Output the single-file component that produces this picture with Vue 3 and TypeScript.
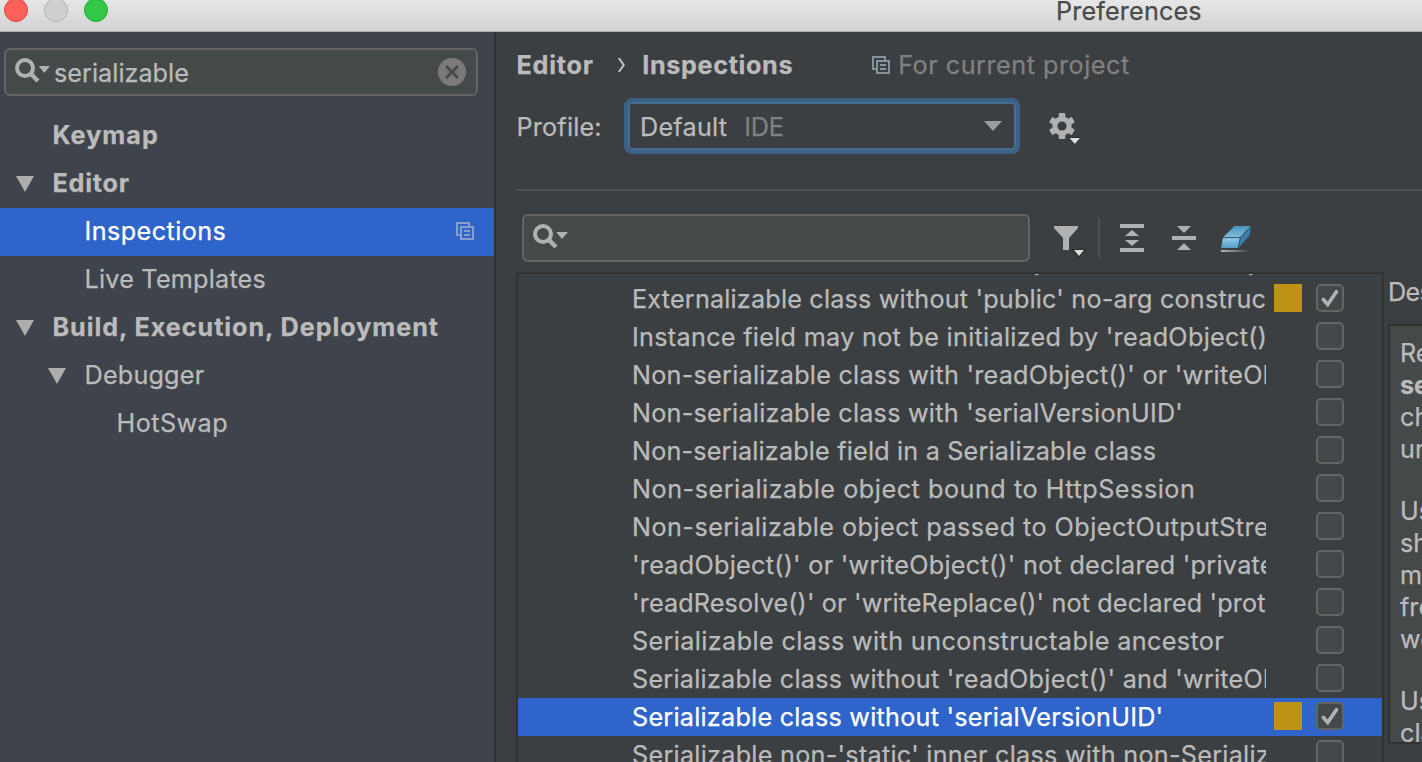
<script setup lang="ts">
interface TreeItem {
  label: string
  level: 0 | 1 | 2
  bold?: boolean
  open?: boolean
  selected?: boolean
  spacing: number
}

interface Inspection {
  label: string
  spacing: number
  checked?: boolean
  selected?: boolean
}

const tree: TreeItem[] = [
  { label: 'Keymap', level: 0, bold: true, spacing: 1 },
  { label: 'Editor', level: 0, bold: true, open: true, spacing: 0.75 },
  { label: 'Inspections', level: 1, selected: true, spacing: 0.43 },
  { label: 'Live Templates', level: 1, spacing: 0.22 },
  { label: 'Build, Execution, Deployment', level: 0, bold: true, open: true, spacing: 0.94 },
  { label: 'Debugger', level: 1, open: true, spacing: 0.2 },
  { label: 'HotSwap', level: 2, spacing: 0.45 },
]

const inspections: Inspection[] = [
  { label: "Externalizable class with 'readObject()' or 'writeObject()'", spacing: 0.24 },
  { label: "Externalizable class without 'public' no-arg constructor", spacing: 0.19, checked: true },
  { label: "Instance field may not be initialized by 'readObject()'", spacing: 0.3 },
  { label: "Non-serializable class with 'readObject()' or 'writeObject()'", spacing: 0.25 },
  { label: "Non-serializable class with 'serialVersionUID'", spacing: 0.24 },
  { label: 'Non-serializable field in a Serializable class', spacing: 0.18 },
  { label: 'Non-serializable object bound to HttpSession', spacing: 0.53 },
  { label: 'Non-serializable object passed to ObjectOutputStream', spacing: 0.46 },
  { label: "'readObject()' or 'writeObject()' not declared 'private'", spacing: 0.27 },
  { label: "'readResolve()' or 'writeReplace()' not declared 'protected'", spacing: 0.14 },
  { label: 'Serializable class with unconstructable ancestor', spacing: 0.38 },
  { label: "Serializable class without 'readObject()' and 'writeObject()'", spacing: 0.25 },
  { label: "Serializable class without 'serialVersionUID'", spacing: 0.24, checked: true, selected: true },
  { label: "Serializable non-'static' inner class with non-Serializable outer class", spacing: 0.27 },
]

const description: { text: string; bold?: boolean }[][] = [
  [{ text: 'Reports' }, { text: 'serialVersionUID', bold: true }, { text: 'checks' }, { text: 'unless' }],
  [{ text: 'Use' }, { text: 'should' }, { text: 'may' }, { text: 'from' }, { text: 'we' }],
  [{ text: 'Use' }, { text: 'class' }],
]
</script>

<template>
  <div class="window">
    <header class="titlebar">
      <div class="lights">
        <i class="light red"></i><i class="light gray"></i><i class="light green"></i>
      </div>
      <span class="title">Preferences</span>
    </header>

    <div class="body">
      <aside class="sidebar">
        <div class="field side-search">
          <svg class="search-icon" width="36" height="26" viewBox="0 0 36 26">
            <circle cx="11" cy="11" r="8" fill="none" stroke="#afb1b3" stroke-width="4" />
            <path d="M16.5 16.5 L24 24" stroke="#afb1b3" stroke-width="4.4" />
            <path d="M24.6 9 H36 L30.3 16 Z" fill="#afb1b3" />
          </svg>
          <span class="query">serializable</span>
          <svg class="clear" width="28" height="28" viewBox="0 0 28 28">
            <circle cx="14" cy="14" r="14" fill="#7a7a7a" />
            <path d="M8 8 L20 20 M20 8 L8 20" stroke="#45494a" stroke-width="2.8" />
          </svg>
        </div>
        <nav class="tree">
          <div v-for="item in tree" :key="item.label" class="node" :class="['level' + item.level, { bold: item.bold, selected: item.selected }]">
            <span class="twisty">
              <svg v-if="item.open" width="18" height="16" viewBox="0 0 18 16"><path d="M0 0 H18 L9 16 Z" fill="#adadad" /></svg>
            </span>
            <span class="node-label" :style="{ letterSpacing: item.spacing + 'px' }">{{ item.label }}</span>
            <svg v-if="item.selected" class="copy" width="18" height="18" viewBox="0 0 18 18" fill="none" stroke="#84a0c8" stroke-width="2">
              <path d="M4 13 H1 V1 H13 V4" /><rect x="5" y="5" width="12" height="12" /><path d="M8 9 H14 M8 13 H14" />
            </svg>
          </div>
        </nav>
      </aside>

      <main class="content">
        <div class="crumbs">
          <b class="crumb-a">Editor</b>
          <svg class="chevron" width="8" height="14" viewBox="0 0 8 14"><path d="M0.8 0 L5.7 7 L0.8 14" fill="none" stroke="#c4c4c4" stroke-width="2" /></svg>
          <b class="crumb-b">Inspections</b>
          <svg class="copy-head" width="18" height="18" viewBox="0 0 18 18" fill="none" stroke="#87939a" stroke-width="2">
            <path d="M4 13 H1 V1 H13 V4" /><rect x="5" y="5" width="12" height="12" /><path d="M8 9 H14 M8 13 H14" />
          </svg>
          <span class="scope">For current project</span>
        </div>

        <div class="profile">
          <span class="profile-label">Profile:</span>
          <div class="combo">
            <span class="combo-value">Default</span><span class="combo-kind">IDE</span>
            <svg class="combo-arrow" width="18" height="10" viewBox="0 0 18 10"><path d="M0 0 H18 L9 10 Z" fill="#9b9ea0" /></svg>
          </div>
          <svg class="gear" width="32" height="34" viewBox="0 0 32 34">
            <g fill="#afb1b3">
              <rect v-for="a in [0, 60, 120]" :key="a" x="9.8" y="0" width="6.4" height="26" rx="0.8" :transform="`rotate(${a} 13 13)`" />
            </g>
            <circle cx="13" cy="13" r="7" fill="none" stroke="#afb1b3" stroke-width="5.4" />
            <circle cx="13" cy="13" r="4.6" fill="#3c3f41" />
            <path d="M18 24 H32 L26 32 Z" fill="#2b2d2e" /><path d="M20.5 25 H31 L25.8 31 Z" fill="#dedede" />
          </svg>
        </div>

        <div class="rule"></div>

        <div class="toolbar">
          <div class="field list-search">
            <svg class="search-icon" width="36" height="26" viewBox="0 0 36 26">
              <circle cx="11" cy="11" r="8" fill="none" stroke="#afb1b3" stroke-width="4" />
              <path d="M16.5 16.5 L24 24" stroke="#afb1b3" stroke-width="4.4" />
              <path d="M24.2 9 H36 L30 16 Z" fill="#afb1b3" />
            </svg>
          </div>
          <svg class="filter" width="32" height="32" viewBox="0 0 32 32">
            <path d="M0 0 H24 V2 L15 12 V24 H9 V12 L0 2 Z" fill="#afb1b3" />
            <path d="M17 23 H32 L25 32 Z" fill="#2b2d2e" /><path d="M20 24 H30 L25 30 Z" fill="#dedede" />
          </svg>
          <i class="bar"></i>
          <svg class="expand" width="24" height="28" viewBox="0 0 24 28" fill="#afb1b3">
            <path d="M0 0 H24 V4 H0 Z M0 24 H24 V28 H0 Z M12 6 L19 12 H5 Z M5 16 H19 L12 22 Z" />
          </svg>
          <svg class="collapse" width="24" height="24" viewBox="0 0 24 24" fill="#afb1b3">
            <path d="M0 10 H24 V14 H0 Z M5 0 H19 L12 7 Z M12 17 L19 24 H5 Z" />
          </svg>
          <svg class="eraser" width="32" height="26" viewBox="0 0 32 26">
            <defs>
              <linearGradient id="er-top" x1="0" y1="0" x2="0" y2="1"><stop offset="0" stop-color="#4a94c0" /><stop offset="1" stop-color="#83bddb" /></linearGradient>
              <linearGradient id="er-front" x1="0" y1="0" x2="0" y2="1"><stop offset="0" stop-color="#93cbe6" /><stop offset="1" stop-color="#4f9cc8" /></linearGradient>
              <linearGradient id="er-line"><stop offset="0" stop-color="#b5b5b5" /><stop offset="1" stop-color="#3c3f41" /></linearGradient>
            </defs>
            <path d="M14.5 0 H31 L20 11.5 H3 Z" fill="url(#er-top)" />
            <path d="M3 12 H20 L18 22 H1 Z" fill="url(#er-front)" />
            <path d="M31 0.5 L29.5 9.5 L18.5 22 L20.5 11.5 Z" fill="#3c7dad" />
            <path d="M3 11.6 H20.3 L31 0.2 M20.3 11.6 L18.2 22" fill="none" stroke="#26526c" stroke-width="0.9" />
            <rect x="1" y="24" width="30" height="2" fill="url(#er-line)" />
          </svg>
        </div>

        <div class="panes">
          <section class="list">
            <div v-for="row in inspections" :key="row.label" class="row" :class="{ selected: row.selected }">
              <span class="row-label" :style="{ letterSpacing: row.spacing + 'px' }">{{ row.label }}</span>
              <i class="severity" :class="{ shown: row.checked }"></i>
              <span class="check">
                <svg v-if="row.checked" width="24" height="24" viewBox="0 0 24 24"><path d="M5.4 13.5 L9.7 18.5 L18.4 5.8" fill="none" stroke="#afb1b3" stroke-width="3.7" stroke-linecap="round" /></svg>
              </span>
            </div>
          </section>
          <section class="details">
            <span class="details-title">Description</span>
            <div class="details-box">
              <p v-for="(para, i) in description" :key="i">
                <span v-for="(line, j) in para" :key="j" :class="{ bold: line.bold }">{{ line.text }}</span>
              </p>
            </div>
          </section>
        </div>
      </main>
    </div>
  </div>
</template>

<style>
body { overflow: hidden; background: #3c3f41; }
</style>

<style scoped>
* { box-sizing: border-box; }
.window { display: flex; flex-direction: column; width: 1422px; height: 762px; overflow: hidden; background: #3c3f41; color: #bbb; font-family: Inter, "Open Sans", sans-serif; font-size: 25.2px; line-height: 32px; white-space: nowrap; -webkit-text-stroke: 0.25px currentColor; }
svg { display: block; flex: none; }
.bold { font-weight: 700; }
.titlebar { display: flex; flex: none; height: 32px; background: linear-gradient(#e7e7e7, #d2d2d2); border-bottom: 1px solid #b0b0b0; overflow: hidden; }
.lights { display: flex; gap: 16px; margin: -2px 0 0 4px; width: 1052px; }
.light { width: 24px; height: 24px; border-radius: 50%; border: 1px solid; }
.red { background: #fc605b; border-color: #e24640; }
.gray { background: #cfcfcf; border-color: #b1b1b1; }
.green { background: #34c84a; border-color: #1fae32; }
.title { margin-top: -5px; color: #4a4a4a; letter-spacing: 0.15px; }
.body { display: flex; flex: 1; min-height: 0; }
.sidebar { flex: none; width: 496px; background: #3f434c; border-right: 2px solid #323232; padding-top: 16px; }
.field { display: flex; align-items: center; height: 48px; border: 2px solid #646464; border-radius: 6px; background: #45494a; }
.side-search { width: 474px; margin-left: 4px; padding: 0 10px 0 8px; }
.search-icon { margin-top: -4px; }
.query { flex: 1; margin: 2px 0 0 4px; letter-spacing: 0.03px; }
.tree { margin-top: 16px; }
.node { display: flex; align-items: center; height: 48px; padding-left: 16px; }
.level1 { padding-left: 48px; }
.level2 { padding-left: 80px; }
.twisty { width: 36px; }
.node-label { flex: 1; margin-top: -3px; padding-left: 0.5px; }
.node.selected { background: #2f65ca; color: #fff; }
.copy { margin: -2px 20px 0 0; }
.content { flex: 1; min-width: 0; padding-left: 20px; overflow: hidden; }
.crumbs { display: flex; align-items: center; height: 66px; }
.crumb-a { margin-left: 0.5px; letter-spacing: 0.75px; }
.chevron { margin-left: 24px; }
.crumb-b { margin-left: 16.5px; letter-spacing: 0.65px; }
.copy-head { margin-left: 78.4px; }
.scope { margin-left: 8.6px; color: #808080; letter-spacing: 0.52px; }
.profile { display: flex; align-items: center; height: 56px; }
.profile-label { width: 108px; margin-top: 2px; padding-left: 0.5px; letter-spacing: 0.2px; }
.combo { display: flex; align-items: center; width: 396px; height: 56px; padding: 0 14px 0 11px; border: 4px solid #3d6185; border-radius: 8px; box-shadow: inset 0 0 0 2px #466d94; }
.combo-value { margin: 2px 0 0 1px; letter-spacing: 0.25px; }
.combo-kind { margin: 2px 0 0 17px; flex: 1; color: #808080; letter-spacing: -0.3px; }
.gear { margin: 8px 0 0 29px; }
.rule { height: 2px; margin: 35px 0 0 1px; background: #515151; }
.toolbar { display: flex; align-items: center; height: 48px; margin: 23px 0 0 6px; }
.list-search { width: 508px; padding-left: 8px; }
.filter { margin: 8px 0 0 24px; }
.bar { width: 2px; height: 40px; margin-left: 12px; background: #515151; }
.expand { margin-left: 20px; }
.collapse { margin-left: 28px; }
.eraser { margin: 2px 0 0 24px; }
.panes { display: flex; height: 500px; margin-top: 10px; }
.list { flex: none; width: 868px; overflow: hidden; border: 2px solid #323232; border-bottom: 0; }
.row { display: flex; align-items: center; height: 38px; padding-left: 114px; }
.row:first-child { margin-top: -32px; }
.row-label { width: 634px; overflow: hidden; line-height: 38px; }
.severity { width: 28px; height: 28px; margin: -2px 14px 0 8px; visibility: hidden; background: #be9117; }
.severity.shown { visibility: visible; }
.check { width: 28px; height: 28px; margin-top: -2px; border: 2px solid #646464; border-radius: 5px; background: #43494a; }
.row.selected { background: #2f65ca; color: #fff; }
.details { flex: 1; min-width: 0; padding: 4px 0 0 4px; overflow: hidden; }
.details-title { display: block; height: 48px; letter-spacing: -0.7px; }
.details-box { height: 420px; border: 2px solid #323232; border-right: 0; background: #45494a; padding: 11px 0 0 10px; overflow: hidden; }
p { display: flex; flex-direction: column; margin: 0 0 30px; }
p:last-child { margin-bottom: 0; }
</style>
